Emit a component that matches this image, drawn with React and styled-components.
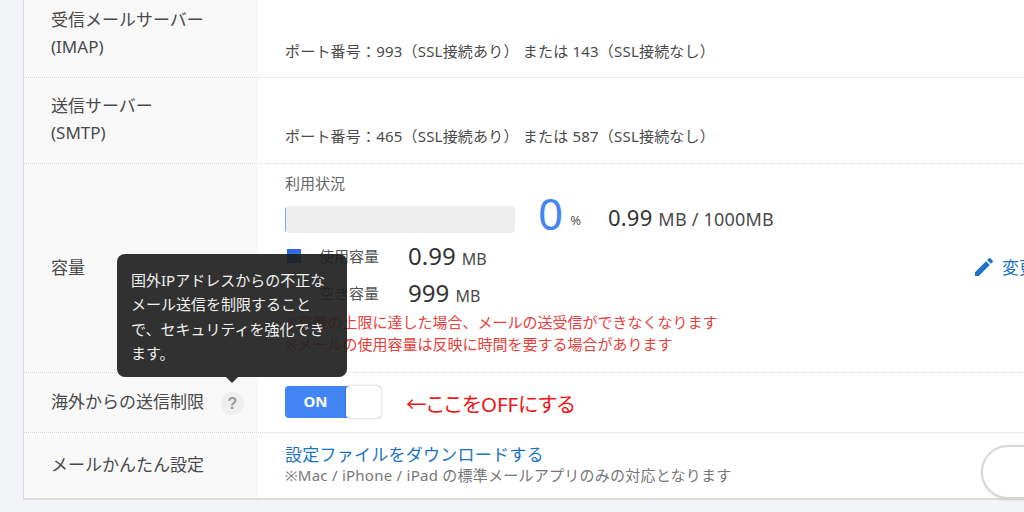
import React from "react";
import styled, { createGlobalStyle } from "styled-components";
import { MdEdit } from "react-icons/md";

const Global = createGlobalStyle`
  html, body { margin: 0; padding: 0; background: #f2f4f8; overflow: hidden; }
  body { font-family: "Noto Sans", "Noto Sans CJK JP", sans-serif; color: #444; }
`;

const Page = styled.div`
  position: relative;
  width: 1024px;
  height: 512px;
  overflow: hidden;
  padding-left: 23px;
  box-sizing: border-box;
`;

const Table = styled.div`
  width: 1001px;
  border-left: 1px solid #dcdcdc;
  border-bottom: 2px solid #dedede;
  background: #fff;
`;

const Row = styled.div`
  display: grid;
  grid-template-columns: 234px 1fr;
  height: ${(p) => p.$h}px;
  box-sizing: border-box;
  border-bottom: ${(p) => (p.$last ? "none" : "1px dotted #d4d4d4")};
`;

const Label = styled.div`
  background: #f8f8f9;
  padding: ${(p) => p.$top || 0}px 0 ${(p) => (p.$top ? 0 : 2)}px 27px;
  display: flex;
  align-items: ${(p) => (p.$top ? "flex-start" : "center")};
  gap: 17px;
  font-size: 17px;
  line-height: 27px;
  color: #4a4a4a;
`;

const Cell = styled.div`
  padding: ${(p) => p.$top || 0}px 0 0 27px;
  position: relative;
  min-width: 0;
`;

const Port = styled.div`
  font-size: 15px;
  line-height: 20px;
  letter-spacing: 0.2px;
  color: #4a4a4a;
  white-space: nowrap;
`;

const Caption = styled.div`
  font-size: 15px;
  line-height: 18px;
  color: #666;
`;

const UsageLine = styled.div`
  display: flex;
  align-items: center;
  height: 44px;
  margin-top: 5px;
`;

const Bar = styled.div`
  width: 230px;
  height: 27px;
  border-radius: 4px;
  background: #eeeeee;
  overflow: hidden;
`;

const BarFill = styled.div`
  height: 100%;
  background: #7aa7f5;
`;

const Percent = styled.span`
  font-size: 44px;
  line-height: 44px;
  color: #4285f4;
  margin: -12px 0 0 23px;
`;

const PercentUnit = styled.span`
  font-size: 13px;
  color: #555;
  margin: 2px 0 0 7px;
`;

const Total = styled.span`
  font-size: 22px;
  line-height: 30px;
  color: #333;
  margin: -2px 0 0 27px;
  letter-spacing: 0.2px;
  white-space: nowrap;
`;

const TotalUnit = styled.span`
  font-size: 18px;
  color: #4a4a4a;
`;

const Stats = styled.div`
  margin-top: -4px;
`;

const Stat = styled.div`
  display: grid;
  grid-template-columns: 34px 89px auto;
  align-items: center;
  height: 37px;
`;

const Swatch = styled.span`
  width: 14px;
  height: 14px;
  margin-left: 2px;
  background: ${(p) => p.$color};
`;

const StatName = styled.span`
  font-size: 15px;
  color: #555;
`;

const StatValue = styled.span`
  font-size: 24px;
  color: #333;
  white-space: nowrap;
`;

const StatUnit = styled.span`
  font-size: 16px;
  color: #4a4a4a;
`;

const Notes = styled.div`
  margin-top: 0;
  font-size: 15px;
  line-height: 22px;
  color: #e8413c;
  white-space: nowrap;
`;

const EditLink = styled.a`
  position: absolute;
  left: 714px;
  top: 90px;
  display: flex;
  align-items: center;
  gap: 6px;
  font-size: 17px;
  color: #1a73c8;
  white-space: nowrap;
`;

const SwitchRow = styled.div`
  display: flex;
  align-items: center;
  height: 100%;
`;

const Switch = styled.div`
  width: 96px;
  height: 32px;
  border-radius: 4px;
  background: #4285f4;
  display: flex;
  justify-content: space-between;
  margin-top: -1px;
`;

const SwitchText = styled.span`
  width: 61px;
  text-align: center;
  color: #fff;
  font-size: 15px;
  font-weight: 700;
  line-height: 30px;
`;

const SwitchKnob = styled.span`
  width: 35px;
  height: 32px;
  background: #fff;
  border-radius: 4px;
  box-shadow: 0 0 3px rgba(0, 0, 0, 0.25);
`;

const Annotation = styled.span`
  margin-left: 25px;
  font-size: 20.5px;
  font-feature-settings: "palt";
  color: #f01414;
  white-space: nowrap;
`;

const Help = styled.span`
  width: 23px;
  height: 23px;
  border-radius: 50%;
  background: #eeeeee;
  color: #999;
  font-size: 16px;
  font-weight: 700;
  line-height: 23px;
  text-align: center;
  margin-top: 4px;
  font-family: "Liberation Sans", sans-serif;
`;

const DownloadLink = styled.a`
  display: block;
  font-size: 17px;
  line-height: 23px;
  letter-spacing: 0.25px;
  color: #1a73c8;
`;

const Hint = styled.div`
  font-size: 15px;
  line-height: 19px;
  letter-spacing: 0.25px;
  color: #777;
  white-space: nowrap;
`;

const Tooltip = styled.div`
  position: absolute;
  left: 117px;
  top: 254px;
  width: 230px;
  height: 123px;
  box-sizing: border-box;
  padding: 14px 14px;
  border-radius: 8px;
  background: rgba(32, 32, 32, 0.92);
  color: #f0f0f0;
  font-size: 15px;
  line-height: 24.3px;

  &::after {
    content: "";
    position: absolute;
    left: 109px;
    top: 123px;
    border: 6px solid transparent;
    border-top-color: rgba(32, 32, 32, 0.92);
    border-bottom: none;
  }
`;

const FloatButton = styled.div`
  position: absolute;
  left: 981px;
  top: 445px;
  width: 90px;
  height: 54px;
  box-sizing: border-box;
  border-radius: 27px;
  background: #fff;
  border: 2px solid #d6d6d6;
  box-shadow: 0 1px 3px rgba(0, 0, 0, 0.1);
`;

export default function App() {
  return (
    <Page>
      <Global />
      <Table>
        <Row $h={78}>
          <Label $top={6}><span>受信メールサーバー<br />(IMAP)</span></Label>
          <Cell $top={41}><Port>ポート番号：993（SSL接続あり） または 143（SSL接続なし）</Port></Cell>
        </Row>
        <Row $h={86}>
          <Label $top={14}><span>送信サーバー<br />(SMTP)</span></Label>
          <Cell $top={48}><Port>ポート番号：465（SSL接続あり） または 587（SSL接続なし）</Port></Cell>
        </Row>
        <Row $h={209}>
          <Label>容量</Label>
          <Cell $top={10}>
            <Caption>利用状況</Caption>
            <UsageLine>
              <Bar><BarFill style={{ width: "1px" }} /></Bar>
              <Percent>0</Percent>
              <PercentUnit>%</PercentUnit>
              <Total>0.99 <TotalUnit>MB / 1000MB</TotalUnit></Total>
            </UsageLine>
            <Stats>
              <Stat>
                <Swatch $color="#2f6fdc" />
                <StatName>使用容量</StatName>
                <StatValue>0.99 <StatUnit>MB</StatUnit></StatValue>
              </Stat>
              <Stat>
                <Swatch $color="#eeeeee" />
                <StatName>空き容量</StatName>
                <StatValue>999 <StatUnit>MB</StatUnit></StatValue>
              </Stat>
            </Stats>
            <Notes>
              ※容量の上限に達した場合、メールの送受信ができなくなります<br />
              ※メールの使用容量は反映に時間を要する場合があります
            </Notes>
            <EditLink><MdEdit size={24} />変更</EditLink>
          </Cell>
        </Row>
        <Row $h={60}>
          <Label>海外からの送信制限<Help>?</Help></Label>
          <Cell>
            <SwitchRow>
              <Switch><SwitchText>ON</SwitchText><SwitchKnob /></Switch>
              <Annotation>←ここをOFFにする</Annotation>
            </SwitchRow>
          </Cell>
        </Row>
        <Row $h={65} $last>
          <Label>メールかんたん設定</Label>
          <Cell $top={10}>
            <DownloadLink>設定ファイルをダウンロードする</DownloadLink>
            <Hint>※Mac / iPhone / iPad の標準メールアプリのみの対応となります</Hint>
          </Cell>
        </Row>
      </Table>
      <Tooltip>国外IPアドレスからの不正なメール送信を制限することで、セキュリティを強化できます。</Tooltip>
      <FloatButton />
    </Page>
  );
}
